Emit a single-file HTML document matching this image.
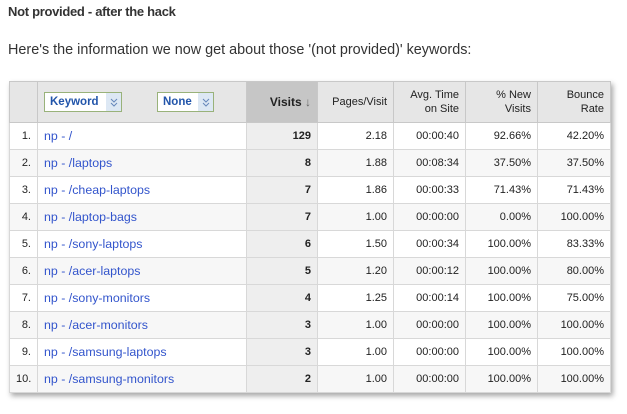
<!DOCTYPE html>
<html><head><style>
body{margin:0;background:#fff;width:627px;height:414px;overflow:hidden;font-family:"Liberation Sans",Arial,sans-serif;}
.t1{position:absolute;left:8px;top:4px;font-size:13px;font-weight:bold;color:#333;letter-spacing:-0.3px;}
.t2{position:absolute;left:8px;top:42px;font-size:14.4px;color:#333;}
table{position:absolute;left:9px;top:81px;border-collapse:collapse;table-layout:fixed;width:601px;box-shadow:2px 3px 5px rgba(0,0,0,.35);font-size:11px;color:#222;}
td,th{border:1px solid #d8d8d8;padding:0 6px;text-align:right;height:26px;white-space:nowrap;}
th{background:#e6e6e6;font-weight:normal;height:40px;line-height:14px;border-color:#c8c8c8;}
th.v{background:#c6c6c6;font-weight:bold;font-size:12px;}
tr:nth-child(odd) td{background:#f7f7f7;}
td.v{background:#eeeeee !important;font-weight:bold;}
td.k{text-align:left;color:#3355cc;font-size:12.4px;}
.dd{position:absolute;top:10px;display:flex;border:1px solid #99b27a;height:20px;line-height:18px;font-size:11.5px;font-weight:bold;color:#2255aa;background:#fff;box-sizing:border-box;text-align:left;}
.dd span{flex:1;padding-left:5px;}
.dd i{width:15px;height:18px;background:#dde8f4;display:flex;align-items:center;justify-content:center;}
</style></head><body>
<div class="t1">Not provided - after the hack</div>
<div class="t2">Here's the information we now get about those '(not provided)' keywords:</div>
<table>
<colgroup><col style="width:28px"><col style="width:209px"><col style="width:71px"><col style="width:76px"><col style="width:72px"><col style="width:72px"><col style="width:73px"></colgroup>
<tr><th></th><th style="position:relative;padding:0"><div class="dd" style="left:6px;width:78px"><span>Keyword</span><i><svg width="8" height="9" viewBox="0 0 8 9"><path d="M1 1l3 3 3-3M1 5l3 3 3-3" fill="none" stroke="#6688bb" stroke-width="1"/></svg></i></div><div class="dd" style="left:119px;width:57px"><span>None</span><i><svg width="8" height="9" viewBox="0 0 8 9"><path d="M1 1l3 3 3-3M1 5l3 3 3-3" fill="none" stroke="#6688bb" stroke-width="1"/></svg></i></div></th><th class="v">Visits <span style="color:#666">↓</span></th><th>Pages/Visit</th><th>Avg. Time<br>on Site</th><th>% New<br>Visits</th><th>Bounce<br>Rate</th></tr>
<tr><td>1.</td><td class="k">np - /</td><td class="v">129</td><td>2.18</td><td>00:00:40</td><td>92.66%</td><td>42.20%</td></tr>
<tr><td>2.</td><td class="k">np - /laptops</td><td class="v">8</td><td>1.88</td><td>00:08:34</td><td>37.50%</td><td>37.50%</td></tr>
<tr><td>3.</td><td class="k">np - /cheap-laptops</td><td class="v">7</td><td>1.86</td><td>00:00:33</td><td>71.43%</td><td>71.43%</td></tr>
<tr><td>4.</td><td class="k">np - /laptop-bags</td><td class="v">7</td><td>1.00</td><td>00:00:00</td><td>0.00%</td><td>100.00%</td></tr>
<tr><td>5.</td><td class="k">np - /sony-laptops</td><td class="v">6</td><td>1.50</td><td>00:00:34</td><td>100.00%</td><td>83.33%</td></tr>
<tr><td>6.</td><td class="k">np - /acer-laptops</td><td class="v">5</td><td>1.20</td><td>00:00:12</td><td>100.00%</td><td>80.00%</td></tr>
<tr><td>7.</td><td class="k">np - /sony-monitors</td><td class="v">4</td><td>1.25</td><td>00:00:14</td><td>100.00%</td><td>75.00%</td></tr>
<tr><td>8.</td><td class="k">np - /acer-monitors</td><td class="v">3</td><td>1.00</td><td>00:00:00</td><td>100.00%</td><td>100.00%</td></tr>
<tr><td>9.</td><td class="k">np - /samsung-laptops</td><td class="v">3</td><td>1.00</td><td>00:00:00</td><td>100.00%</td><td>100.00%</td></tr>
<tr><td>10.</td><td class="k">np - /samsung-monitors</td><td class="v">2</td><td>1.00</td><td>00:00:00</td><td>100.00%</td><td>100.00%</td></tr>
</table>
</body></html>
